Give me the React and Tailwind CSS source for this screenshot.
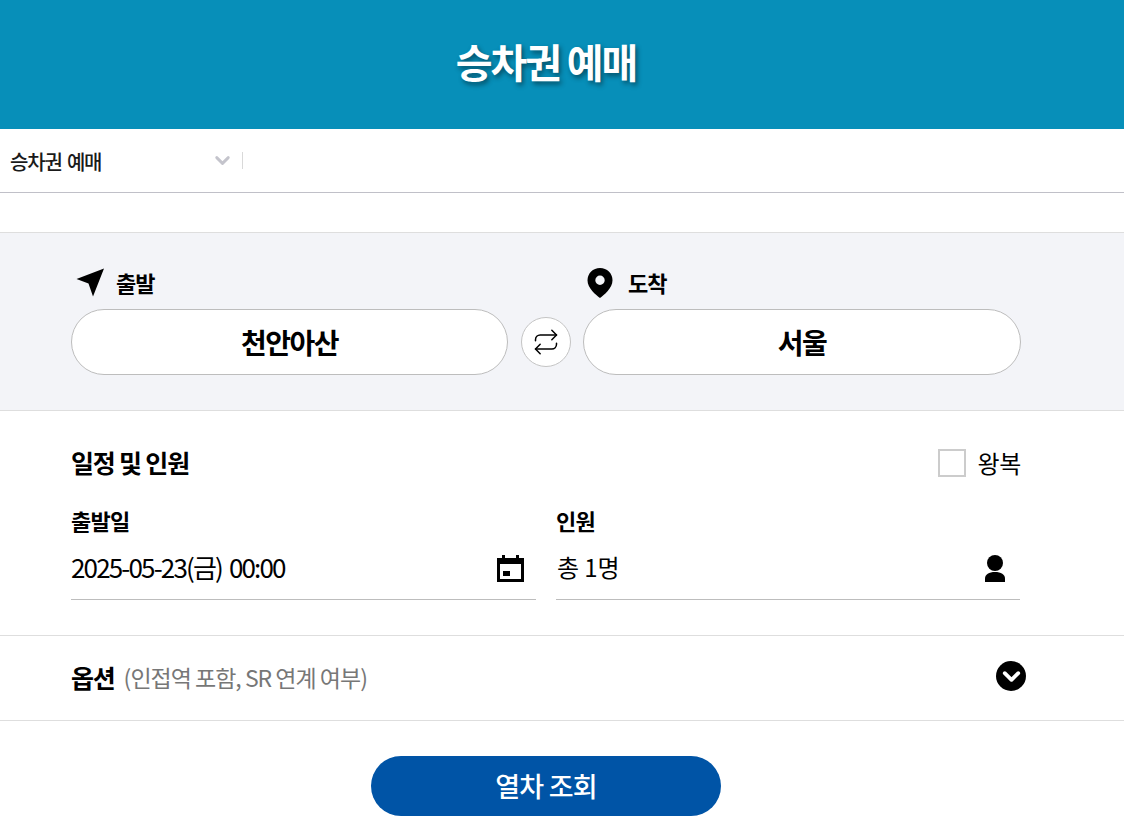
import React from 'react';
import { ChevronDown, Repeat } from 'lucide-react';

const fontStack = "[font-family:'Noto_Sans_CJK_KR','Noto_Sans',sans-serif]";

const App = () => {
  return (
    <div className={`${fontStack} h-[823px] overflow-hidden bg-white text-black`}>
      {/* Title */}
      <header className="h-[129px] bg-[#078fb9] flex items-center justify-center pb-[8px] pr-[32px]">
        <h1 className="text-[40px] font-bold tracking-[-2.1px] text-white [text-shadow:2px_3px_5px_rgba(0,0,0,0.45)]">
          승차권 예매
        </h1>
      </header>

      {/* Breadcrumb */}
      <nav className="h-[64px] border-b border-[#c0c0c8] flex items-start pt-[23px]">
        <div className="w-[243px] h-[17px] border-r border-[#d9d9d9] pl-[10px] pr-[10px] flex items-center justify-between">
          <span className="text-[20px] font-medium tracking-[-1.2px] [word-spacing:2px] text-[#1a1a1a] leading-[17px] mt-[1px]">승차권 예매</span>
          <ChevronDown size={23} strokeWidth={3} className="text-[#c4c4cc] -mr-[2px]" />
        </div>
      </nav>

      <div className="h-[39px]" />

      {/* Route */}
      <section className="h-[179px] bg-[#f3f4f8] border-y border-[#dedede] pl-[71px] pr-[103px] pt-[34px]">
        <div className="flex h-[32px]">
          <div className="w-[512px] flex items-center pl-[4px]">
            <svg width="30" height="30" viewBox="0 0 30 30">
              <path d="M1.500 11 L29 0.500 L18 28.500 L13.500 15.500 Z" fill="#000" />
            </svg>
            <span className="ml-[11px] text-[22px] font-bold tracking-[-0.9px] leading-[32px] -mt-[3px]">출발</span>
          </div>
          <div className="flex items-center pl-[4px]">
            <svg width="26" height="32" viewBox="0 0 26 32" className="-mt-[1px]">
              <path fillRule="evenodd" d="M13 1C6 1 0.500 6.400 0.500 13.200C0.500 21 9 28 13 31C17 28 25.500 21 25.500 13.200C25.500 6.400 20 1 13 1ZM13 8.500A4.700 4.700 0 1 1 13 17.900A4.700 4.700 0 1 1 13 8.500Z" fill="#000" />
            </svg>
            <span className="ml-[15px] text-[22px] font-bold tracking-[-0.9px] leading-[32px] -mt-[3px]">도착</span>
          </div>
        </div>
        <div className="flex items-center mt-[10px]">
          <button className="w-[437px] h-[66px] rounded-[33px] bg-white border border-[#bdbdbd] text-[28px] font-bold tracking-[-1.5px]">천안아산</button>
          <button className="ml-[13px] w-[50px] h-[50px] rounded-full bg-white border border-[#c4c4c4] flex items-center justify-center">
            <Repeat size={28} strokeWidth={1.3} />
          </button>
          <button className="ml-[12px] w-[438px] h-[66px] rounded-[33px] bg-white border border-[#bdbdbd] text-[28px] font-bold tracking-[-1.5px]">서울</button>
        </div>
      </section>

      {/* Schedule and passengers */}
      <section className="h-[225px] border-b border-[#dedede] pl-[71px] pr-[103px] pt-[33px]">
        <div className="flex items-center justify-between h-[38px]">
          <h2 className="text-[25px] font-bold tracking-[-1.2px]">일정 및 인원</h2>
          <label className="flex items-center gap-[11px]">
            <span className="w-[28px] h-[28px] border-2 border-[#cccccc] bg-white" />
            <span className="text-[24px] tracking-[-0.3px]">왕복</span>
          </label>
        </div>
        <div className="grid grid-cols-[465px_464px] gap-[20px] mt-[22px]">
          <div>
            <div className="text-[22px] font-bold tracking-[-0.8px] leading-[32px]">출발일</div>
            <div className="h-[64px] pb-[3px] border-b border-[#bdbdbd] flex items-center justify-between pr-[12px]">
              <span className="text-[26px] tracking-[-1.85px] [word-spacing:3px] mt-[1px]">2025-05-23(금) 00:00</span>
              <svg width="27" height="27" viewBox="0 0 27 27" fill="#000" className="mt-[5px]">
                <path fillRule="evenodd" d="M5 0h3v3h11V0h3v3h5v24H0V3h5ZM3 9v15h21V9Z" />
                <rect x="6" y="16" width="7" height="5" />
              </svg>
            </div>
          </div>
          <div>
            <div className="text-[22px] font-bold tracking-[-0.8px] leading-[32px]">인원</div>
            <div className="h-[64px] pb-[3px] border-b border-[#bdbdbd] flex items-center justify-between pl-[1px] pr-[15px]">
              <span className="text-[24px] tracking-[-0.1px] mt-[1px]">총 1명</span>
              <svg width="20" height="27" viewBox="0 0 20 27" fill="#000" className="mt-[5px]">
                <circle cx="10" cy="8" r="8" />
                <path d="M0 27V23.500C0 19.500 4 17 10 17C16 17 20 19.500 20 23.500V27Z" />
              </svg>
            </div>
          </div>
        </div>
      </section>

      {/* Options */}
      <section className="h-[85px] border-b border-[#dedede] pl-[71px] pr-[98px] flex items-center justify-between">
        <div className="flex items-center">
          <span className="text-[25px] font-bold tracking-[-1.2px] -mt-[1px]">옵션</span>
          <span className="ml-[9px] text-[23px] tracking-[-1px] text-[#777777] -mt-[1px]">(인접역 포함, SR 연계 여부)</span>
        </div>
        <span className="w-[30px] h-[30px] rounded-full bg-black flex items-center justify-center -mt-[5px]">
          <ChevronDown size={27} strokeWidth={3.3} className="text-white mt-[1px]" />
        </span>
      </section>

      {/* Submit */}
      <div className="flex justify-center pt-[35px] pr-[32px]">
        <button className="w-[350px] h-[60px] rounded-[30px] bg-[#0054a6] text-white text-[27px] font-medium tracking-[-0.8px]">
          열차 조회
        </button>
      </div>
    </div>
  );
};

export default App;
